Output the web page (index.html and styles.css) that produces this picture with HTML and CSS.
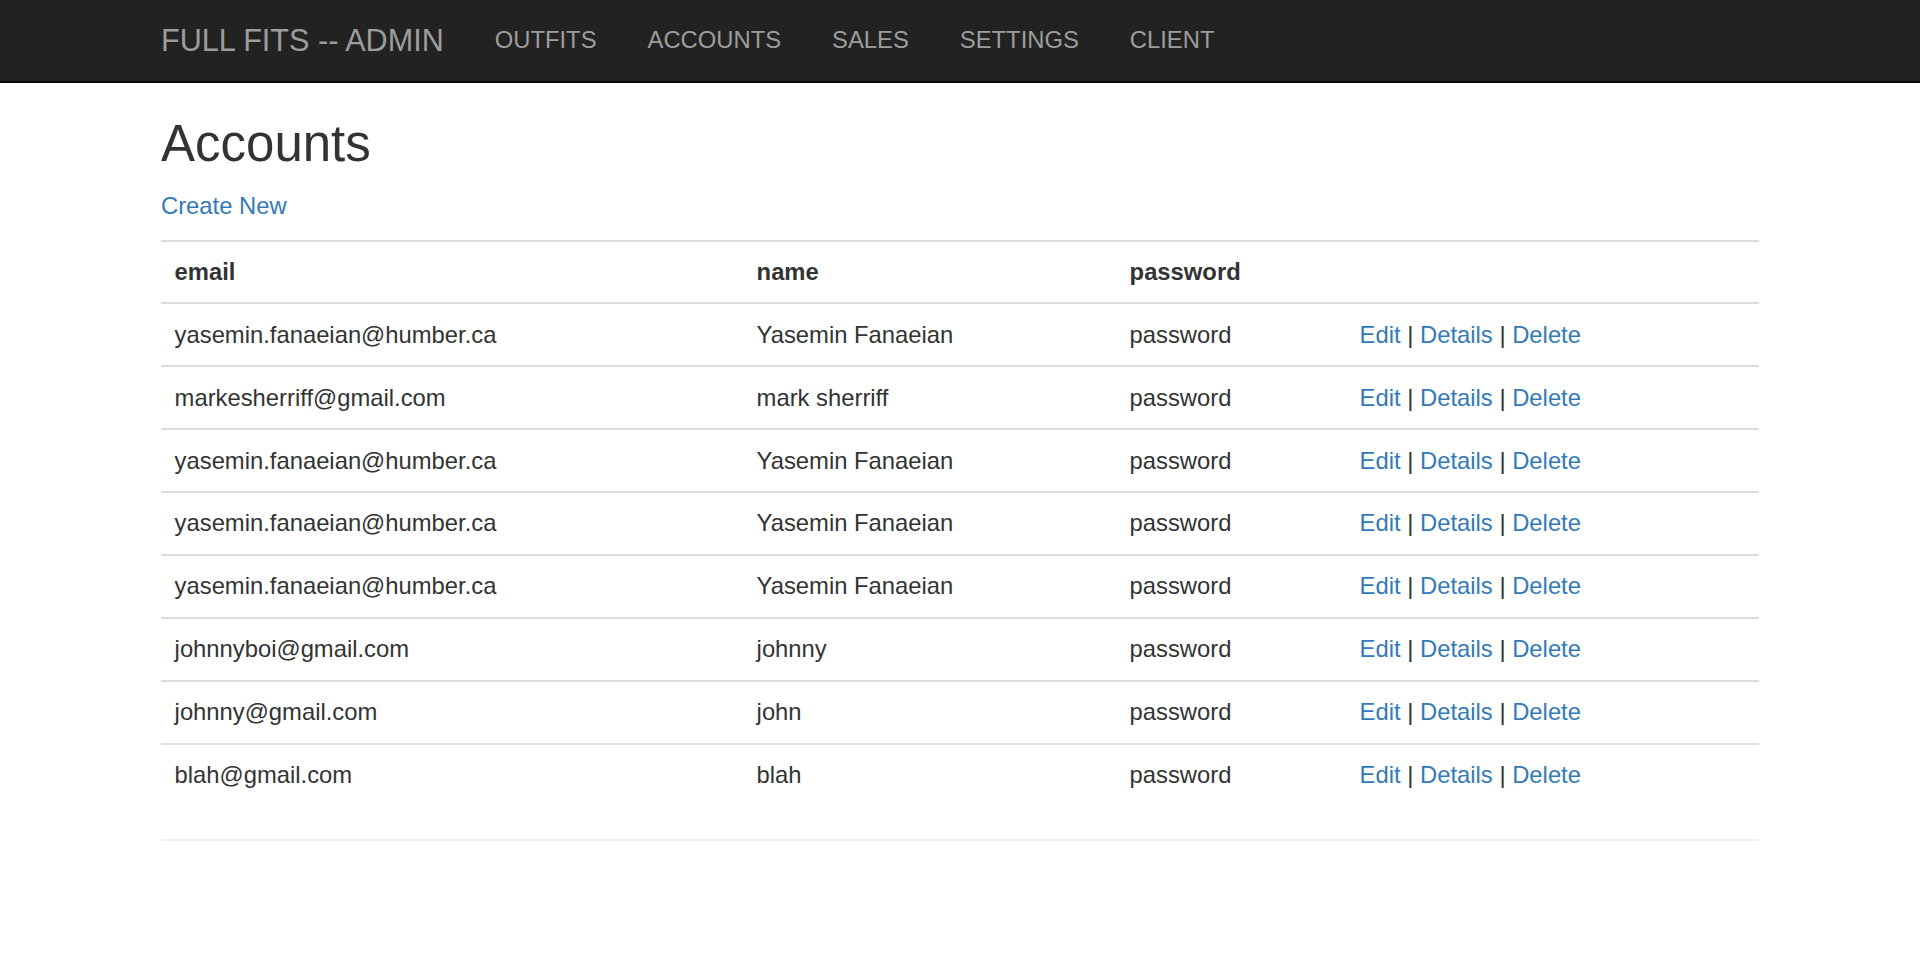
FILE: index.html
```html
<!DOCTYPE html>
<html lang="en">
<head>
<meta charset="utf-8">
<title>Accounts - FULL FITS -- ADMIN</title>
<link rel="stylesheet" href="styles.css">
</head>
<body>
<nav class="navbar">
  <div class="nav-container">
    <a class="brand" href="#">FULL FITS -- ADMIN</a>
    <ul class="nav">
      <li><a href="#">OUTFITS</a></li>
      <li><a href="#">ACCOUNTS</a></li>
      <li><a href="#">SALES</a></li>
      <li><a href="#">SETTINGS</a></li>
      <li><a href="#">CLIENT</a></li>
    </ul>
  </div>
</nav>
<main class="container">
  <h2 class="title">Accounts</h2>
  <p class="create"><a href="#">Create New</a></p>
  <table class="table">
    <colgroup>
      <col class="c-email">
      <col class="c-name">
      <col class="c-pass">
      <col>
    </colgroup>
    <tr><th>email</th><th>name</th><th>password</th><th></th></tr>
    <tr><td>yasemin.fanaeian@humber.ca</td><td>Yasemin Fanaeian</td><td>password</td><td><a href="#">Edit</a> | <a href="#">Details</a> | <a href="#">Delete</a></td></tr>
    <tr><td>markesherriff@gmail.com</td><td>mark sherriff</td><td>password</td><td><a href="#">Edit</a> | <a href="#">Details</a> | <a href="#">Delete</a></td></tr>
    <tr><td>yasemin.fanaeian@humber.ca</td><td>Yasemin Fanaeian</td><td>password</td><td><a href="#">Edit</a> | <a href="#">Details</a> | <a href="#">Delete</a></td></tr>
    <tr><td>yasemin.fanaeian@humber.ca</td><td>Yasemin Fanaeian</td><td>password</td><td><a href="#">Edit</a> | <a href="#">Details</a> | <a href="#">Delete</a></td></tr>
    <tr><td>yasemin.fanaeian@humber.ca</td><td>Yasemin Fanaeian</td><td>password</td><td><a href="#">Edit</a> | <a href="#">Details</a> | <a href="#">Delete</a></td></tr>
    <tr><td>johnnyboi@gmail.com</td><td>johnny</td><td>password</td><td><a href="#">Edit</a> | <a href="#">Details</a> | <a href="#">Delete</a></td></tr>
    <tr><td>johnny@gmail.com</td><td>john</td><td>password</td><td><a href="#">Edit</a> | <a href="#">Details</a> | <a href="#">Delete</a></td></tr>
    <tr><td>blah@gmail.com</td><td>blah</td><td>password</td><td><a href="#">Edit</a> | <a href="#">Details</a> | <a href="#">Delete</a></td></tr>
  </table>
  <hr class="rule">
  <footer class="footer"></footer>
</main>
</body>
</html>
```
FILE: styles.css
```css
* { box-sizing: border-box; }
html, body { margin: 0; padding: 0; }
body {
  font-family: "Liberation Sans", Arial, Helvetica, sans-serif;
  font-size: 23.8px;
  line-height: 34px;
  color: #333;
  background: #fff;
}
a { color: #337ab7; text-decoration: none; }

.navbar {
  background: #222;
  height: 83px;
  border-bottom: 2px solid #080808;
}
.nav-container {
  width: 1649px;
  margin: 0 auto;
  display: flex;
  align-items: flex-start;
  height: 81px;
}
.brand {
  color: #9d9d9d;
  font-size: 30.6px;
  line-height: 34px;
  padding: 23px 25.5px 0;
  height: 81px;
}
.nav {
  list-style: none;
  margin: 0;
  padding: 0;
  display: flex;
}
.nav a {
  display: block;
  color: #9d9d9d;
  font-size: 23.8px;
  line-height: 34px;
  padding: 23px 25.5px 0;
  height: 81px;
}

.container {
  width: 1598px;
  margin: 0 auto;
}
.title {
  font-size: 51px;
  font-weight: 500;
  line-height: 56px;
  margin: 33px 0 17px;
}
.create {
  margin: 0 0 16.5px;
}
.table {
  width: 100%;
  border-collapse: collapse;
  table-layout: fixed;
  margin-bottom: 34px;
}
.c-email { width: 582px; }
.c-name { width: 373px; }
.c-pass { width: 230px; }
.table th, .table td {
  text-align: left;
  padding: 13.45px 13.6px;
  line-height: 34px;
  border-top: 2px solid #ddd;
  vertical-align: top;
  white-space: nowrap;
}
.table th { font-weight: bold; }
.rule {
  border: 0;
  border-top: 2px solid #eee;
  margin: 34px 0;
}
```
